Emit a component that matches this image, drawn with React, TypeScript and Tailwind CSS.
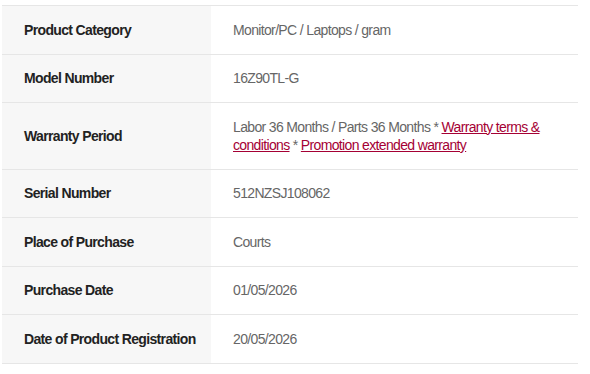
const ROWS: { label: string; value: React.ReactNode }[] = [
  { label: "Product Category", value: "Monitor/PC / Laptops / gram" },
  { label: "Model Number", value: "16Z90TL-G" },
  {
    label: "Warranty Period",
    value: (
      <>
        Labor 36 Months / Parts 36 Months *{" "}
        <a href="#" className="text-[#a50034] underline">
          Warranty terms &amp; conditions
        </a>{" "}
        *{" "}
        <a href="#" className="text-[#a50034] underline">
          Promotion extended warranty
        </a>
      </>
    ),
  },
  { label: "Serial Number", value: "512NZSJ108062" },
  { label: "Place of Purchase", value: "Courts" },
  { label: "Purchase Date", value: "01/05/2026" },
  { label: "Date of Product Registration", value: "20/05/2026" },
];

export default function App() {
  return (
    <div className="min-h-[374px] bg-white pt-[5px] pl-[2px] font-['Liberation_Sans',Arial,sans-serif] text-[14px] tracking-[-0.65px]">
      <div className="w-[576px] border-t border-[#e6e6e6]">
        {ROWS.map((r) => (
          <div key={r.label} className="grid grid-cols-[209px_1fr] border-b border-[#e6e6e6]">
            <div className="flex items-center whitespace-nowrap bg-[#f7f7f7] py-[14.75px] pl-[22px] pr-[8px] font-bold leading-[18px] text-[#222]">
              {r.label}
            </div>
            <div className="flex items-center py-[14.75px] pl-[22px] pr-[22px] leading-[18px] text-[#666]">
              <div>{r.value}</div>
            </div>
          </div>
        ))}
      </div>
    </div>
  );
}
